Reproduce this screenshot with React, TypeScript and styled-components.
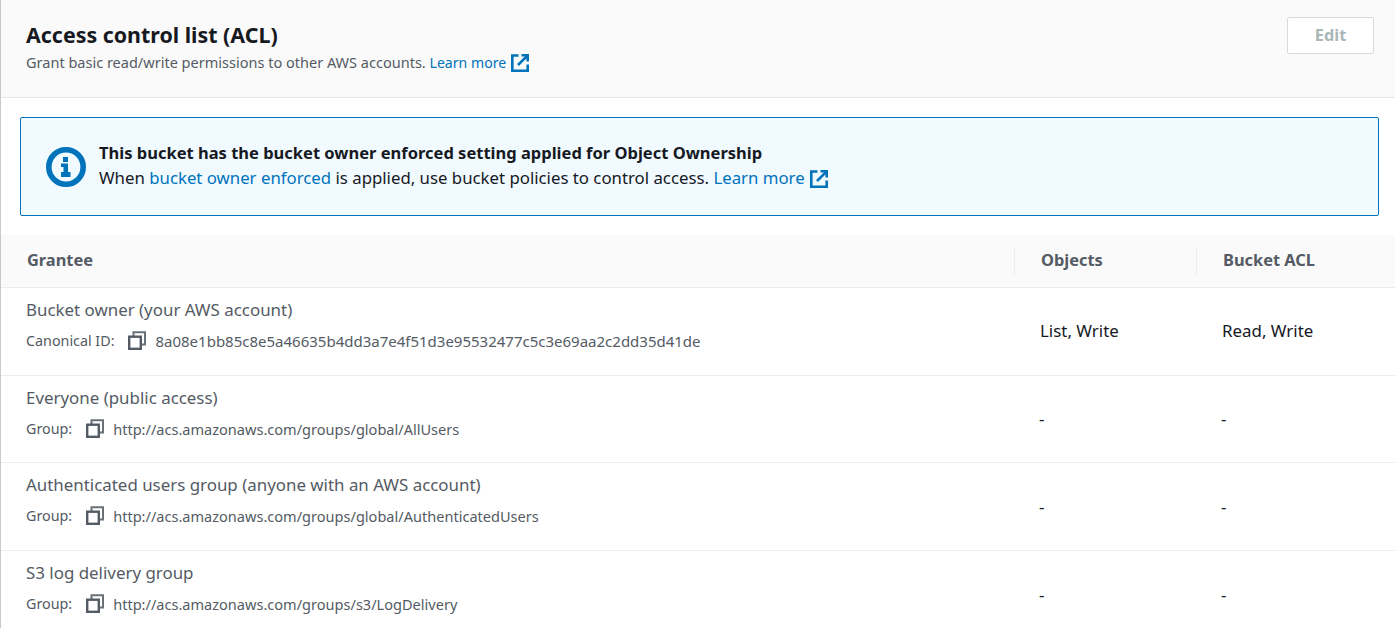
import React from 'react';
import styled, { createGlobalStyle } from 'styled-components';

const GlobalStyle = createGlobalStyle`
  html, body {
    margin: 0;
    padding: 0;
    background: #fff;
    overflow: hidden;
  }
  body {
    font-family: "Noto Sans", "Open Sans", sans-serif;
    color: #16191f;
  }
`;

const Panel = styled.section`
  height: 628px;
  border-left: 1px solid #c6cace;
  overflow: hidden;
`;

const Header = styled.header`
  display: flex;
  justify-content: space-between;
  height: 80px;
  padding: 17px 21px 0 25px;
  background: #fafafa;
  border-bottom: 1px solid #e6e8e8;
`;

const HeaderText = styled.div`
  display: flex;
  flex-direction: column;
`;

const Title = styled.h2`
  margin: 4px 0 0;
  font-size: 21.4px;
  line-height: 27px;
  font-weight: 700;
  color: #16191f;
`;

const Description = styled.p`
  margin: 4px 0 0;
  font-size: 14.52px;
  line-height: 20px;
  color: #545b64;
`;

const Link = styled.a<{ $size?: number }>`
  color: #0073bb;
  text-decoration: none;
  ${(p) => (p.$size ? `font-size: ${p.$size}px;` : '')}
`;

const IconWrap = styled.span`
  display: inline-block;
  margin-left: 5px;
  vertical-align: -4px;
  line-height: 0;
`;

const EditButton = styled.button`
  width: 87px;
  height: 37px;
  background: #fff;
  border: 1px solid #d5dbdb;
  border-radius: 2px;
  color: #aab7b8;
  font-family: inherit;
  font-size: 16.4px;
  font-weight: 700;
  padding: 0 0 2px;
`;

const Notice = styled.div`
  display: flex;
  align-items: center;
  height: 99px;
  box-sizing: border-box;
  margin: 19px 16px 19px 19px;
  padding: 0 0 0 25px;
  background: #f1faff;
  border: 1px solid #0073bb;
  border-radius: 2px;
`;

const NoticeIcon = styled.div`
  width: 40px;
  height: 40px;
  margin-right: 13px;
  line-height: 0;
`;

const NoticeBody = styled.div`
  padding-bottom: 4px;
  font-size: 16.8px;
  line-height: 25px;
  color: #16191f;
`;

const NoticeTitle = styled.div`
  font-size: 16.5px;
  font-weight: 700;
`;

const Row = styled.div<{ $height: number }>`
  display: grid;
  grid-template-columns: 1013px 182px 1fr;
  align-items: center;
  height: ${(p) => p.$height}px;
  border-bottom: 1px solid #eaeded;
`;

const HeadRow = styled(Row)`
  background: #fafafa;
`;

const HeadCell = styled.div<{ $divider?: boolean }>`
  height: 26px;
  line-height: 24px;
  padding-left: 26px;
  border-left: ${(p) => (p.$divider ? '1px solid #eaeded' : 'none')};
  font-size: 16.4px;
  font-weight: 700;
  color: #545b64;
`;

const GranteeCell = styled.div`
  padding: 0 0 13px 25px;
  display: flex;
  flex-direction: column;
`;

const GranteeName = styled.div`
  font-size: 16.9px;
  line-height: 22px;
  color: #545b64;
`;

const GranteeMeta = styled.div`
  display: flex;
  align-items: center;
  margin-top: 10px;
  font-size: 14.3px;
  line-height: 20px;
  color: #545b64;
`;

const MetaLabel = styled.span`
  margin-right: 14px;
`;

const MetaValue = styled.span<{ $size: number }>`
  font-size: ${(p) => p.$size}px;
`;

const CopyIcon = styled.span`
  width: 18px;
  height: 20px;
  margin-right: 9px;
  line-height: 0;
`;

const ValueCell = styled.div<{ $empty: boolean }>`
  padding: ${(p) => (p.$empty ? '0 0 0 25px' : '0 0 2px 26px')};
  font-size: 16.9px;
  line-height: 22px;
  color: #16191f;
`;

const ExternalIcon = () => (
  <svg width="18" height="18" viewBox="0 0 18 18" fill="none" stroke="#0073bb" strokeWidth="2.6">
    <path d="M7.500 1.500H1.300v15.200h15.400v-6.200" />
    <path d="M10.500 1.300h6.200v6.200" />
    <path d="M16.200 1.800L7 11" />
  </svg>
);

const InfoIcon = () => (
  <svg width="40" height="40" viewBox="0 0 40 40">
    <circle cx="20" cy="20" r="17.200" fill="none" stroke="#0073bb" strokeWidth="5.600" />
    <rect x="17" y="10" width="5" height="5" fill="#0073bb" />
    <path d="M15 16.500h7v8.500h2.500v5H15v-5h2.500v-5H15z" fill="#0073bb" />
  </svg>
);

const DuplicateIcon = () => (
  <svg width="18" height="20" viewBox="0 0 18 20" fill="none">
    <path d="M5.500 5V1.200H17V13.500H13.500" stroke="#687078" strokeWidth="2" />
    <rect x="1.200" y="5.700" width="11.600" height="12.100" stroke="#545b64" strokeWidth="2.400" />
  </svg>
);

type Grantee = {
  name: string;
  label: string;
  value: string;
  valueSize: number;
  objects: string;
  acl: string;
  height: number;
};

const grantees: Grantee[] = [
  {
    name: 'Bucket owner (your AWS account)',
    label: 'Canonical ID:',
    value: '8a08e1bb85c8e5a46635b4dd3a7e4f51d3e95532477c5c3e69aa2c2dd35d41de',
    valueSize: 15,
    objects: 'List, Write',
    acl: 'Read, Write',
    height: 87,
  },
  {
    name: 'Everyone (public access)',
    label: 'Group:',
    value: 'http://acs.amazonaws.com/groups/global/AllUsers',
    valueSize: 14.55,
    objects: '-',
    acl: '-',
    height: 86,
  },
  {
    name: 'Authenticated users group (anyone with an AWS account)',
    label: 'Group:',
    value: 'http://acs.amazonaws.com/groups/global/AuthenticatedUsers',
    valueSize: 14.55,
    objects: '-',
    acl: '-',
    height: 87,
  },
  {
    name: 'S3 log delivery group',
    label: 'Group:',
    value: 'http://acs.amazonaws.com/groups/s3/LogDelivery',
    valueSize: 14.55,
    objects: '-',
    acl: '-',
    height: 87,
  },
];

const App = () => {
  return (
    <Panel>
      <GlobalStyle />
      <Header>
        <HeaderText>
          <Title>Access control list (ACL)</Title>
          <Description>
            Grant basic read/write permissions to other AWS accounts. <Link href="#" $size={14.1}>Learn more</Link>
            <IconWrap><ExternalIcon /></IconWrap>
          </Description>
        </HeaderText>
        <EditButton disabled>Edit</EditButton>
      </Header>

      <Notice>
        <NoticeIcon><InfoIcon /></NoticeIcon>
        <NoticeBody>
          <NoticeTitle>This bucket has the bucket owner enforced setting applied for Object Ownership</NoticeTitle>
          <div>
            When <Link href="#">bucket owner enforced</Link> is applied, use bucket policies to control access. <Link href="#">Learn more</Link>
            <IconWrap><ExternalIcon /></IconWrap>
          </div>
        </NoticeBody>
      </Notice>

      <HeadRow $height={52}>
        <HeadCell>Grantee</HeadCell>
        <HeadCell $divider>Objects</HeadCell>
        <HeadCell $divider>Bucket ACL</HeadCell>
      </HeadRow>
      {grantees.map((g) => (
        <Row key={g.name} $height={g.height}>
          <GranteeCell>
            <GranteeName>{g.name}</GranteeName>
            <GranteeMeta>
              <MetaLabel>{g.label}</MetaLabel>
              <CopyIcon><DuplicateIcon /></CopyIcon>
              <MetaValue $size={g.valueSize}>{g.value}</MetaValue>
            </GranteeMeta>
          </GranteeCell>
          <ValueCell $empty={g.objects === '-'}>{g.objects}</ValueCell>
          <ValueCell $empty={g.acl === '-'}>{g.acl}</ValueCell>
        </Row>
      ))}
    </Panel>
  );
};

export default App;
